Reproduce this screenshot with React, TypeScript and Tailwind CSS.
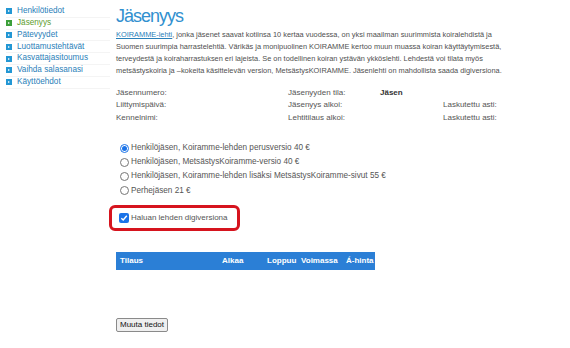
import React, { useState } from "react";

const menu = [
    "Henkilötiedot",
    "Jäsenyys",
    "Pätevyydet",
    "Luottamustehtävät",
    "Kasvattajasitoumus",
    "Vaihda salasanasi",
    "Käyttöehdot",
];

const options = [
    "Henkilöjäsen, Koiramme-lehden perusversio 40 €",
    "Henkilöjäsen, MetsästysKoiramme-versio 40 €",
    "Henkilöjäsen, Koiramme-lehden lisäksi MetsästysKoiramme-sivut 55 €",
    "Perhejäsen 21 €",
];

const App: React.FC = () => {
    const [choice, setChoice] = useState<number>(0);
    const [digi, setDigi] = useState<boolean>(true);

    return (
        <div className="flex w-[570px] h-[348px] bg-white text-[#555] text-[8px] font-['Liberation_Sans',Arial,sans-serif]">
            <div className="w-[110px] pt-[6px] pl-[6px] flex flex-col">
                {menu.map((item, i) => (
                    <div key={item} className="flex items-center h-[11.8px] gap-[5px] border-b border-[#f4f4f4]">
                        <span
                            className={
                                i === 1
                                    ? "w-[6px] h-[6px] bg-[#3c9f3a] flex items-center justify-center"
                                    : "w-[6px] h-[6px] bg-[#2397d4] flex items-center justify-center"
                            }
                        >
                            <span className="w-0 h-0 border-y-[1.5px] border-y-transparent border-l-[2px] border-l-white"></span>
                        </span>
                        <span className={i === 1 ? "text-[8.2px] text-[#5c9c2c]" : "text-[8.2px] text-[#2a80b9]"}>
                            {item}
                        </span>
                    </div>
                ))}
            </div>

            <div className="flex flex-col pl-[6px] pt-[5px]">
                <h1 className="text-[18px] leading-[22px] tracking-[-1px] text-[#3190cf]">Jäsenyys</h1>
                <p className="mt-[2px] text-[7.4px] leading-[12px] whitespace-nowrap text-[#4f4f4f]">
                    <span className="text-[#2a80b9] underline">KOIRAMME-lehti</span>, jonka jäsenet saavat kotiinsa 10 kertaa vuodessa, on yksi maailman suurimmista koiralehdistä ja
                    <br />
                    Suomen suurimpia harrastelehtiä. Värikäs ja monipuolinen KOIRAMME kertoo muun muassa koiran käyttäytymisestä,
                    <br />
                    terveydestä ja koiraharrastuksen eri lajeista. Se on todellinen koiran ystävän ykköslehti. Lehdestä voi tilata myös
                    <br />
                    metsästyskoiria ja –kokeita käsittelevän version, MetsästysKOIRAMME. Jäsenlehti on mahdollista saada digiversiona.
                </p>

                <div className="mt-[10px] grid grid-cols-[172px_92px_63px_100px] leading-[12.3px]">
                    <span>Jäsennumero:</span>
                    <span>Jäsenyyden tila:</span>
                    <span className="font-bold text-[#333]">Jäsen</span>
                    <span></span>
                    <span>Liittymispäivä:</span>
                    <span>Jäsenyys alkoi:</span>
                    <span></span>
                    <span>Laskutettu asti:</span>
                    <span>Kennelnimi:</span>
                    <span>Lehtitilaus alkoi:</span>
                    <span></span>
                    <span>Laskutettu asti:</span>
                </div>

                <div className="mt-[17px] flex flex-col pl-[4px] text-[8.2px]">
                    {options.map((opt, i) => (
                        <label key={opt} className="flex items-center h-[14.3px] gap-[2px] cursor-pointer">
                            <span
                                className={
                                    choice === i
                                        ? "w-[9px] h-[9px] rounded-full border border-[#1a73e8] flex items-center justify-center"
                                        : "w-[9px] h-[9px] rounded-full border border-[#767676] flex items-center justify-center"
                                }
                                onClick={() => setChoice(i)}
                            >
                                {choice === i && <span className="w-[5px] h-[5px] rounded-full bg-[#1a73e8]"></span>}
                            </span>
                            <span>{opt}</span>
                        </label>
                    ))}
                </div>

                <div className="mt-[7px] -ml-[7px] w-[131px] h-[26px] border-[3px] border-[#d6141e] rounded-[6px] flex items-center pl-[7px] gap-[2px]">
                    <span
                        className="w-[10px] h-[10px] rounded-[2px] bg-[#1a73e8] flex items-center justify-center"
                        onClick={() => setDigi(!digi)}
                    >
                        {digi && (
                            <svg width="8" height="8" viewBox="0 0 8 8">
                                <path d="M1.3 4.2 L3.2 6 L6.8 1.8" fill="none" stroke="white" strokeWidth="1.4" />
                            </svg>
                        )}
                    </span>
                    <span>Haluan lehden digiversiona</span>
                </div>

                <div className="mt-[21px] w-[259px] h-[18px] bg-[#2b7fd6] text-white font-bold flex items-center">
                    <span className="w-[106px] pl-[4px]">Tilaus</span>
                    <span className="w-[45px]">Alkaa</span>
                    <span className="w-[34px]">Loppuu</span>
                    <span className="w-[45px]">Voimassa</span>
                    <span>Á-hinta</span>
                </div>

                <div className="mt-[48px]">
                    <button className="h-[14px] w-[52px] border border-[#8a8a8a] rounded-[2px] bg-[#efefef] text-[#111] text-[8px] leading-[12px]">
                        Muuta tiedot
                    </button>
                </div>
            </div>
        </div>
    );
};

export default App;
